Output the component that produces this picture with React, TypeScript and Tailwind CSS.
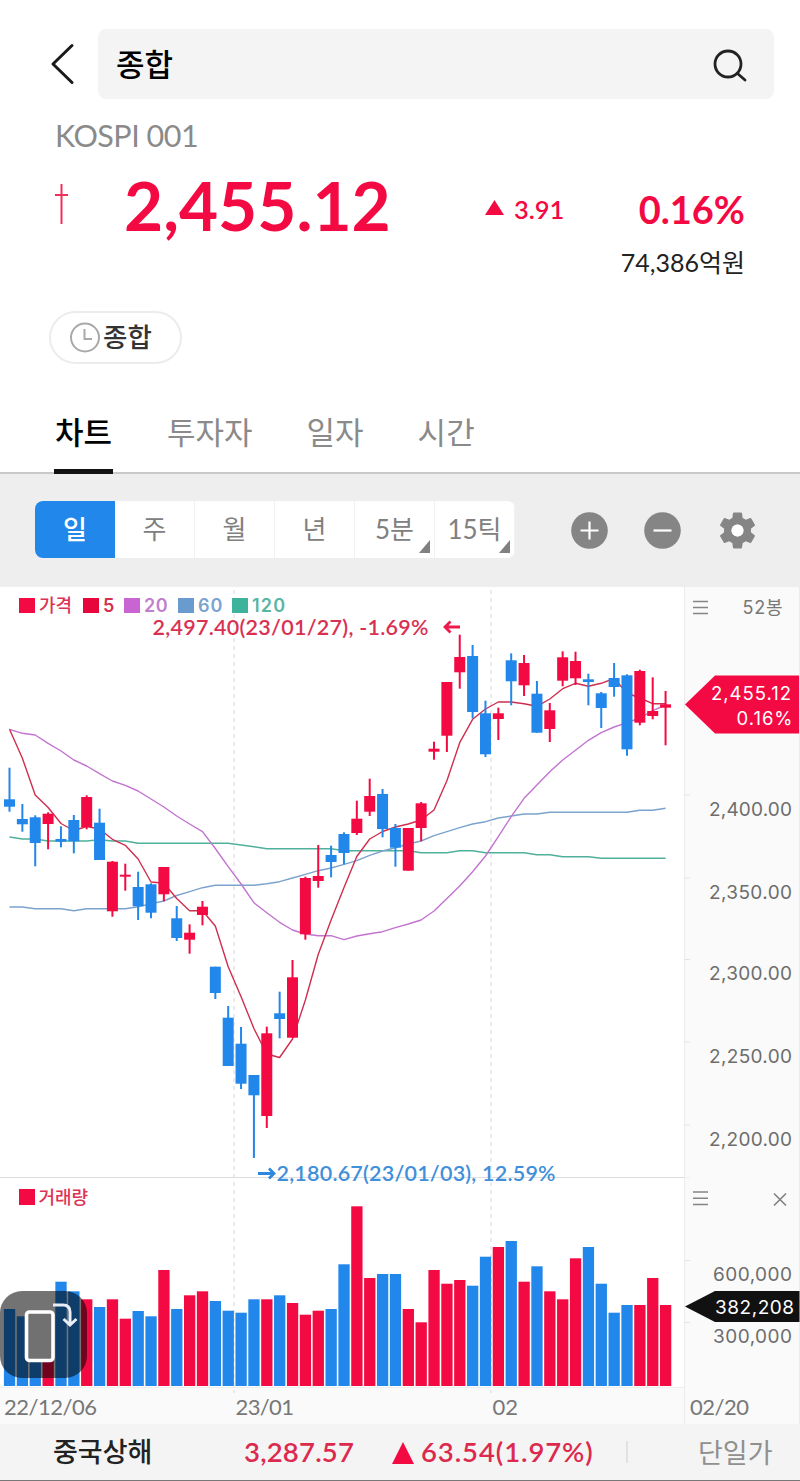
import { ReactNode } from 'react'

const RED = '#f40a43'
const BLUE = '#2287ea'

// up/down, high, low, body top, body bottom, volume top
type Candle = ['u' | 'd', number, number, number, number, number]

const candles: Candle[] = [
  ['d', 767.7, 811.7, 799.3, 806.7, 1309],
  ['d', 804, 831.7, 819, 824.3, 1316.3],
  ['d', 815.3, 866.3, 817.3, 843, 1330],
  ['u', 812.3, 849.3, 813.7, 824, 1330],
  ['d', 826.3, 847.3, 839, 841.7, 1281.7],
  ['d', 815, 853.3, 820, 841.3, 1291.3],
  ['u', 795.3, 829.3, 797, 827, 1299.3],
  ['d', 808.7, 860, 822.7, 860, 1307],
  ['u', 861, 916.7, 861.7, 911.3, 1299.3],
  ['u', 863.7, 890.7, 874.7, 876.7, 1318.7],
  ['d', 871.7, 920, 887, 906.3, 1311],
  ['d', 883.3, 918.3, 884.3, 912.7, 1316.3],
  ['u', 867, 901.3, 867, 894.3, 1270],
  ['d', 906, 941, 918.3, 938, 1309],
  ['u', 924.3, 953.7, 932.7, 939.7, 1295.3],
  ['u', 901, 925.3, 906.7, 915, 1291.3],
  ['d', 966.7, 999, 966.7, 993, 1301],
  ['d', 1006, 1066, 1017.7, 1066, 1310.7],
  ['d', 1027, 1089, 1043.7, 1083.7, 1312.7],
  ['d', 1075, 1158, 1075, 1095.3, 1299.3],
  ['u', 1026.7, 1128, 1033.3, 1116, 1299.3],
  ['d', 991.7, 1038.3, 1013.3, 1019, 1295.3],
  ['u', 960, 1038, 977.3, 1037.7, 1303],
  ['u', 876.7, 939.7, 878, 934.3, 1314.7],
  ['u', 845, 887.7, 876, 881, 1310.7],
  ['d', 845.7, 877.3, 855, 862, 1309],
  ['d', 832.3, 864.3, 834, 853, 1264.3],
  ['u', 800.7, 835, 818.7, 833, 1206.3],
  ['u', 778.7, 816, 796, 811.7, 1278],
  ['d', 789, 837.3, 794, 829, 1274],
  ['d', 824, 866.7, 828, 847.7, 1274],
  ['u', 828, 870.7, 828, 870.7, 1309],
  ['u', 802, 841.3, 803.3, 828, 1322.3],
  ['u', 741.7, 759.7, 748.7, 751.7, 1270],
  ['u', 682, 752, 682, 735.7, 1283.7],
  ['u', 634.7, 688.7, 657, 672.3, 1280],
  ['d', 645, 718.3, 656, 712, 1285.7],
  ['d', 700.7, 757, 713.3, 754.3, 1256.7],
  ['u', 707.7, 740, 713.3, 719, 1247],
  ['d', 653.3, 705.3, 660.3, 681.3, 1241],
  ['u', 655, 696, 663, 685.3, 1281.7],
  ['d', 681, 732.7, 693.7, 732.7, 1266.3],
  ['u', 703, 742, 710.3, 729, 1291.3],
  ['u', 651.3, 686.3, 657.3, 680.7, 1299.3],
  ['u', 651.7, 685, 661, 678.3, 1258.3],
  ['d', 673.7, 705.3, 679.3, 682, 1247],
  ['d', 692, 728, 693.3, 708, 1283.7],
  ['d', 663, 696.7, 678, 687, 1312.7],
  ['d', 674.3, 755.7, 675.3, 749.3, 1305],
  ['u', 669.7, 725.3, 671, 722.7, 1305],
  ['u', 677.3, 719.3, 711, 716, 1278],
  ['u', 691, 745.3, 704.3, 707.7, 1305],
]

const ma5 = [
  729.3, 758.3, 795, 807.5, 823.5, 830.5, 826.5, 829, 839.3, 845.3, 859, 882, 883.3,
  898.5, 910.7, 910.7, 926, 966.7, 996.7, 1028.5, 1054, 1057.5, 1039, 1000, 954.5, 920,
  887.5, 856.5, 839, 831.5, 827, 824, 820, 810, 780.7, 742.7, 719.3, 709, 702,
  702, 703.7, 706.3, 699, 688.7, 683.3, 686.3, 683.3, 678.5, 693, 698, 703.7, 703.7,
]
const ma20 = [
  729.3, 733.3, 735, 743.3, 751, 760, 766, 773.7, 781, 785.3, 791, 799, 807,
  816, 824, 831.7, 848.5, 866.7, 884, 902.7, 912.7, 922.3, 930, 934, 935.7, 935.7,
  939.7, 936, 933.7, 931.7, 927.7, 924, 920, 911, 898.5, 886, 871.7, 856, 836.7,
  816.7, 798.3, 785, 771.7, 760, 750.3, 740.3, 732.7, 727, 722.7, 718, 710.7, 705,
]
const ma60 = [
  907, 907, 908.7, 908.7, 908.7, 910.7, 908.7, 908.7, 908.7, 908.7, 906.7, 903.7, 901,
  895.5, 891.7, 887.7, 885.3, 885.3, 885.3, 885.3, 883.7, 881.7, 878, 874.3, 870.7, 868,
  864.3, 860.7, 855.3, 851, 847.7, 844, 841, 835.7, 831.7, 827.7, 824, 821.7, 818,
  816, 814, 814, 812.3, 812.3, 812.3, 812.3, 812.3, 812.3, 812.3, 810.3, 810.3, 808.3,
]
const ma120 = [
  837, 839, 839, 841, 841, 841, 841, 839.7, 841, 841, 843.3, 843.3, 843.3,
  843.3, 843.3, 843.3, 843.3, 843.3, 845, 846.7, 848.7, 848.7, 848.7, 848.7, 848.7, 848.7,
  850.7, 850.7, 850.7, 850.7, 850.7, 850.7, 852.7, 852.7, 852.7, 850.7, 850.7, 852.7, 852.7,
  852.7, 852.7, 854.7, 854.7, 856.7, 856.7, 856.7, 858.3, 858.3, 858.3, 858.3, 858.3, 858.3,
]

const cx = (i: number) => 9.5 + i * 12.864
const toPoints = (values: number[]) => values.map((v, i) => `${cx(i).toFixed(1)},${v}`).join(' ')

const lines = [
  { values: ma120, color: '#4fb09b' },
  { values: ma60, color: '#7ba3cd' },
  { values: ma20, color: '#c274d0' },
  { values: ma5, color: '#cf2e4e' },
]

const legend = [
  { label: '가격', box: 'bg-[#f40a43]', text: 'text-[#dc3355] w-[44px] text-[18px] font-medium' },
  { label: '5', box: 'bg-[#e6063c]', text: 'text-[#d2304f] w-[21px] text-[18px] font-semibold' },
  { label: '20', box: 'bg-[#c865d3]', text: 'text-[#c17fce] w-[34px] text-[18px] font-semibold tracking-[0.6px]' },
  { label: '60', box: 'bg-[#6a9bcf]', text: 'text-[#7ba3cd] w-[34px] text-[18px] font-semibold tracking-[0.9px]' },
  { label: '120', box: 'bg-[#3db39c]', text: 'text-[#5ab5a2] w-[40px] text-[18px] font-semibold tracking-[1.2px]' },
]

const priceTicks = [
  { label: '2,400.00', y: 795 },
  { label: '2,350.00', y: 878 },
  { label: '2,300.00', y: 959.5 },
  { label: '2,250.00', y: 1042 },
  { label: '2,200.00', y: 1125 },
]

const periods = [
  { label: '일', active: true },
  { label: '주' },
  { label: '월' },
  { label: '년' },
  { label: '5분', more: true },
  { label: '15틱', more: true },
]

const tabs = ['차트', '투자자', '일자', '시간']

function Header() {
  return (
    <header className="flex h-[99px] items-end pl-[50px] pr-[26px]">
      <svg className="mb-[14px] h-[42px] w-[26px] shrink-0" viewBox="0 0 26 42" fill="none">
        <path d="M22 2.500 L3 21 L22 39.500" stroke="#1a1a1a" strokeWidth="3" strokeLinecap="round" strokeLinejoin="round" />
      </svg>
      <div className="ml-[22px] flex h-[70px] flex-1 items-center justify-between rounded-lg bg-[#f4f4f4] pl-[18px] pr-[26px]">
        <span className="mb-[4px] text-[31px] font-medium leading-none text-black">종합</span>
        <svg className="mt-[3px] h-[36px] w-[36px]" viewBox="0 0 36 36" fill="none" stroke="#222" strokeWidth="2.800" strokeLinecap="round">
          <circle cx="16" cy="16" r="13" />
          <path d="M25.500 25.500 L33 32" />
        </svg>
      </div>
    </header>
  )
}

function Quote() {
  return (
    <section className="h-[212px] pl-[55px] pr-[55px] font-['Lato','Noto_Sans_CJK_KR',sans-serif] text-[#f40a43]">
      <div className="h-[69px] pt-[15px] text-[30.5px] leading-[42px] tracking-[-0.5px] text-[#8a8a8a]">KOSPI 001</div>
      <div className="flex h-[76px] items-center pb-[6px]">
        <svg className="h-[44px] w-[14px]" viewBox="0 0 14 44" fill="none" stroke="#f0305a" strokeWidth="2">
          <path d="M6.500 3 V43 M0 14 H13" />
        </svg>
        <span className="ml-[55px] mt-[4px] w-[361px] text-[67.5px] font-bold leading-none">2,455.12</span>
        <svg className="mt-[9px] h-[17px] w-[19px]" viewBox="0 0 19 17">
          <path d="M9.500 1 L19 16 H0 Z" fill={RED} />
        </svg>
        <span className="ml-[10px] mt-[13px] text-[25.5px] font-semibold leading-none">3.91</span>
        <span className="ml-auto mt-[12px] text-[38px] font-bold leading-none">0.16%</span>
      </div>
      <div className="pt-[1px] text-right text-[25px] leading-[34px] text-[#222]">74,386억원</div>
    </section>
  )
}

function Tabs() {
  return (
    <nav className="flex h-[109px] items-end gap-[54px] border-b-2 border-[#c9c9c9] pl-[54px]">
      {tabs.map((tab, i) => (
        <div
          key={tab}
          className={
            i === 0
              ? '-mb-[2px] h-[68px] w-[59px] whitespace-nowrap border-b-[5px] border-[#111] pl-[1px] text-[31px] font-medium leading-[49px] text-black'
              : '-mb-[2px] h-[68px] text-[31px] leading-[49px] text-[#8a8a8a]'
          }
        >
          {tab}
        </div>
      ))}
    </nav>
  )
}

function Toolbar() {
  return (
    <div className="flex h-[113px] items-center bg-[#eeeeee] pb-[1px] pl-[35px]">
      <div className="mb-[1px] flex h-[57px] w-[480px] overflow-hidden rounded-lg bg-white font-['Lato','Noto_Sans_CJK_KR',sans-serif]">
        {periods.map(p => (
          <div
            key={p.label}
            className={
              p.active
                ? 'relative flex w-[80px] items-center justify-center bg-[#2287ea] text-[26px] font-medium text-white'
                : 'relative flex w-[80px] items-center justify-center border-r border-[#f1f1f1] text-[26px] text-[#808080]'
            }
          >
            {p.label}
            {p.more && (
              <svg className="absolute bottom-[5px] right-[4px] h-[13px] w-[11px]" viewBox="0 0 11 13">
                <path d="M11 0 V13 H0 Z" fill="#808080" />
              </svg>
            )}
          </div>
        ))}
      </div>
      <svg className="ml-[56px] h-[37px] w-[37px]" viewBox="0 0 37 37">
        <circle cx="18.5" cy="18.5" r="18.300" fill="#858585" />
        <path d="M9.500 18.500 H27.500 M18.500 9.500 V27.500" stroke="#fff" strokeWidth="2.200" />
      </svg>
      <svg className="ml-[36px] h-[37px] w-[37px]" viewBox="0 0 37 37">
        <circle cx="18.5" cy="18.5" r="18.300" fill="#858585" />
        <path d="M9.500 18.500 H27.500" stroke="#fff" strokeWidth="2.200" />
      </svg>
      <svg className="ml-[34px] h-[45px] w-[45px]" viewBox="0 0 24 24" fill="#858585">
        <path d="M19.140 12.940c.04-.3.06-.61.06-.94 0-.32-.02-.64-.07-.94l2.030-1.580a.49.49 0 0 0 .12-.61l-1.920-3.320a.488.488 0 0 0-.59-.22l-2.390.96c-.5-.38-1.030-.7-1.620-.94l-.36-2.540a.484.484 0 0 0-.48-.41h-3.840c-.24 0-.43.170-.47.410l-.36 2.540c-.59.240-1.130.570-1.620.940l-2.390-.96a.488.488 0 0 0-.59.220L2.740 8.870c-.12.210-.08.470.12.610l2.030 1.580c-.05.3-.09.630-.09.940s.02.640.07.940l-2.030 1.580a.49.49 0 0 0-.12.610l1.920 3.320c.12.220.37.290.59.220l2.390-.96c.5.380 1.030.7 1.620.940l.36 2.540c.05.240.24.410.48.410h3.840c.24 0 .44-.17.470-.41l.36-2.540c.59-.24 1.130-.56 1.620-.94l2.390.96c.22.080.47 0 .59-.22l1.920-3.320c.12-.22.070-.47-.12-.61zM12 15.200a3.200 3.200 0 1 1 0-6.400 3.200 3.200 0 0 1 0 6.400z" />
        <circle cx="12" cy="12" r="3.200" fill="#fff" />
      </svg>
    </div>
  )
}

function Label({ x, y, size, width, color, weight = 400, family = 'Inter', children }: {
  x: number
  y: number
  size: number
  width: number
  color: string
  weight?: number
  family?: string
  children: ReactNode
}) {
  return (
    <text x={x} y={y} fontSize={size} fill={color} fontWeight={weight} fontFamily={`${family}, "Noto Sans CJK KR", sans-serif`} textLength={width}>
      {children}
    </text>
  )
}

function Plot() {
  return (
    <svg className="block h-[837px] w-[684px]" viewBox="0 587 684 837">
      <rect x="0" y="1387" width="684" height="37" fill="#fafafa" />
      <path d="M0 1387.500 H684" stroke="#eeeeee" />
      {[234, 491].map(x => (
        <path key={x} d={`M${x} 590 V1393`} stroke="#e2dfe2" strokeWidth="1.300" strokeDasharray="4 4" />
      ))}
      <path d="M0 1177.500 H684" stroke="#dedede" />

      {/* Moving averages */}
      {lines.map(l => (
        <polyline key={l.color} points={toPoints(l.values)} fill="none" stroke={l.color} strokeWidth="1.400" strokeLinejoin="round" />
      ))}

      {/* Candles and volume */}
      {candles.map(([dir, high, low, top, bottom, vol], i) => (
        <g key={i} fill={dir === 'u' ? RED : BLUE}>
          <rect x={cx(i) - 1} y={high} width="2" height={low - high} />
          <rect x={cx(i) - 5.5} y={top} width="11" height={bottom - top} />
          <rect x={cx(i) - 5.6} y={vol} width="11.300" height={1386 - vol} />
        </g>
      ))}

      {/* High and low markers */}
      <Label x={152.5} y={634.7} size={21.5} width={276} color="#d83152" weight={600} family="Lato">2,497.40(23/01/27), -1.69%</Label>
      <path d="M460 627 H446 M450.500 621.500 L445 627 L450.500 632.500" fill="none" stroke="#ee1a4b" strokeWidth="2.800" />
      <Label x={276.5} y={1180.7} size={21.5} width={279} color="#3f8fdb" weight={600} family="Lato">2,180.67(23/01/03), 12.59%</Label>
      <path d="M258 1173.500 H273 M269 1168.500 L274 1173.500 L269 1178.500" fill="none" stroke="#2f88e0" strokeWidth="2.800" />

      <Label x={4} y={1415} size={22} width={93} color="#777" family="Lato">22/12/06</Label>
      <Label x={235.5} y={1415} size={22} width={58.5} color="#777" family="Lato">23/01</Label>
      <Label x={492.5} y={1415} size={22} width={25.5} color="#777" family="Lato">02</Label>
    </svg>
  )
}

function Axis() {
  return (
    <svg className="block h-[837px] w-[116px] bg-[#fafafa]" viewBox="684 587 116 837">
      <path d="M684.500 587 V1424 M799.500 587 V1424" stroke="#ececec" />
      <path d="M693 601.500 H708 M693 607.500 H708 M693 613.500 H708" stroke="#858585" strokeWidth="1.500" />
      <Label x={742.5} y={614} size={18} width={40} color="#777">52봉</Label>
      {priceTicks.map(t => (
        <g key={t.label}>
          <path d={`M684 ${t.y} h6`} stroke="#e4e4e4" />
          <Label x={709} y={t.y + 20.9} size={19} width={83} color="#6d6d6d">{t.label}</Label>
        </g>
      ))}
      <path d="M685 704.500 L715 675.500 H799 V733.500 H715 Z" fill={RED} />
      <Label x={711} y={700} size={18.5} width={80} color="#fff">2,455.12</Label>
      <Label x={736.5} y={725} size={18.5} width={56} color="#fff">0.16%</Label>

      <path d="M684 1177.500 H690" stroke="#f0f0f0" />
      <path d="M693 1192 H708 M693 1198.300 H708 M693 1204.600 H708" stroke="#858585" strokeWidth="1.500" />
      <path d="M774 1193.500 L786 1205.500 M786 1193.500 L774 1205.500" stroke="#808080" strokeWidth="1.600" />
      <path d="M684 1260.500 h6 M684 1322.500 h6" stroke="#e4e4e4" />
      <Label x={713} y={1281.3} size={19} width={79} color="#6d6d6d">600,000</Label>
      <Label x={713} y={1343} size={19} width={79} color="#6d6d6d">300,000</Label>
      <path d="M685 1306.500 L715 1291 H799.500 V1322 H715 Z" fill="#111" />
      <Label x={715} y={1313.6} size={19} width={79} color="#fff">382,208</Label>
      <Label x={690} y={1415} size={22} width={59} color="#777" family="Lato">02/20</Label>
    </svg>
  )
}

function Chart() {
  return (
    <section className="relative flex h-[837px]">
      <Plot />
      <Axis />

      {/* Legends */}
      <div className="absolute left-[19px] top-[10.500px] flex h-[16px] items-center font-['Inter','Noto_Sans_CJK_KR',sans-serif]">
        {legend.map(l => (
          <div key={l.label} className="flex items-center">
            <span className={`mr-[4.500px] h-[15.500px] w-[15.500px] ${l.box}`} />
            <span className={`whitespace-nowrap leading-none ${l.text}`}>{l.label}</span>
          </div>
        ))}
      </div>
      <div className="absolute left-[19px] top-[602px] flex h-[16px] items-center">
        <span className="mr-[4px] h-[15.500px] w-[15.500px] bg-[#f40a43]" />
        <span className="mb-[2px] text-[18px] font-medium leading-none text-[#dc3355]">거래량</span>
      </div>

      {/* Rotate screen button */}
      <button className="absolute left-0 top-[704px] h-[87px] w-[87px] rounded-[22px] bg-black/55">
        <svg className="block h-[87px] w-[87px]" viewBox="0 0 87 87" fill="none" stroke="#fff">
          <rect x="26.500" y="21" width="26.500" height="48.500" rx="3" fill="#717171" strokeWidth="3.600" />
          <path d="M53 14 H63 Q70 14 70 21 V33 M63.500 28 L70 34 L76.500 28" strokeWidth="3" stroke="#e8eef5" />
        </svg>
      </button>
    </section>
  )
}

function Footer() {
  return (
    <footer className="flex h-[57px] items-center whitespace-nowrap border-b border-[#777] bg-[#f4f4f4] pl-[53px] text-[#dc2a4e]">
      <span className="mb-[3px] w-[191px] text-[27px] font-medium leading-none text-[#222]">중국상해</span>
      <span className="w-[148px] font-[Lato,sans-serif] text-[27.500px] font-semibold leading-none tracking-[0.2px]">3,287.57</span>
      <svg className="mt-[2px] h-[22px] w-[22px]" viewBox="0 0 22 22">
        <path d="M11 0 L22 22 H0 Z" fill={RED} />
      </svg>
      <span className="ml-[7px] w-[205px] font-[Lato,sans-serif] text-[27.500px] font-semibold leading-none tracking-[0.9px]">63.54(1.97%)</span>
      <span className="h-[22px] w-[2px] bg-[#e2e2e2]" />
      <span className="mb-[2px] ml-[70px] text-[27px] leading-none text-[#909090]">단일가</span>
    </footer>
  )
}

export default function App() {
  return (
    <div className="flex h-[1481px] w-[800px] flex-col overflow-hidden bg-white font-['Noto_Sans_CJK_KR',sans-serif]">
      <Header />
      <Quote />
      <div className="flex h-[54px] pl-[49px]">
        <div className="flex h-[53px] w-[133px] items-center rounded-full border-2 border-[#ececec] pl-[18px]">
          <svg className="h-[32px] w-[32px]" viewBox="0 0 32 32" fill="none" stroke="#a9a9a9" strokeWidth="2">
            <circle cx="16" cy="15.500" r="14" />
            <path d="M15.500 7 V17 H23" />
          </svg>
          <span className="mb-[3px] ml-[2px] text-[26.5px] font-medium leading-none text-[#333]">종합</span>
        </div>
      </div>
      <Tabs />
      <Toolbar />
      <Chart />
      <Footer />
    </div>
  )
}
